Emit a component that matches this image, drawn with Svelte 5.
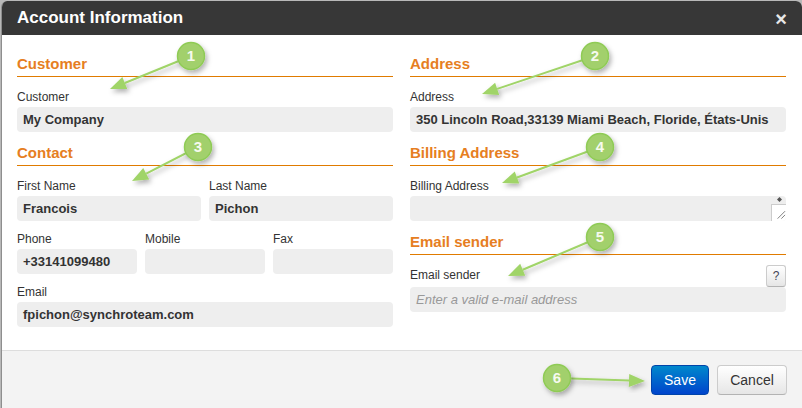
<script>
  const callouts = [
    { n: 1, cx: 191, cy: 56, tx: 110, ty: 89 },
    { n: 2, cx: 595, cy: 56, tx: 482, ty: 94 },
    { n: 3, cx: 198, cy: 147, tx: 132, ty: 181 },
    { n: 4, cx: 600, cy: 147, tx: 502, ty: 183 },
    { n: 5, cx: 600, cy: 237, tx: 508, ty: 276 },
    { n: 6, cx: 557, cy: 378, tx: 645, ty: 381 }
  ].map((c) => {
    const dx = c.cx - c.tx, dy = c.cy - c.ty;
    const len = Math.hypot(dx, dy);
    const ux = dx / len, uy = dy / len;
    const bx = c.tx + ux * 16, by = c.ty + uy * 16;
    const px = -uy * 6.5, py = ux * 6.5;
    return { ...c, bx, by, head: `${c.tx},${c.ty} ${bx + px},${by + py} ${bx - px},${by - py}` };
  });
</script>

<div class="page">
  <div class="modal">
    <header class="top">
      <h3>Account Information</h3>
      <span class="close">×</span>
    </header>
    <div class="body">
      <div class="col">
        <h4>Customer</h4>
        <div class="label">Customer</div>
        <div class="field">My Company</div>

        <h4 class="next">Contact</h4>
        <div class="grid two">
          <div>
            <div class="label">First Name</div>
            <div class="field">Francois</div>
          </div>
          <div>
            <div class="label">Last Name</div>
            <div class="field">Pichon</div>
          </div>
        </div>
        <div class="grid three">
          <div>
            <div class="label">Phone</div>
            <div class="field">+33141099480</div>
          </div>
          <div>
            <div class="label">Mobile</div>
            <div class="field"></div>
          </div>
          <div>
            <div class="label">Fax</div>
            <div class="field"></div>
          </div>
        </div>
        <div class="row">
          <div class="label">Email</div>
          <div class="field">fpichon@synchroteam.com</div>
        </div>
      </div>

      <div class="col">
        <h4>Address</h4>
        <div class="label">Address</div>
        <div class="field">350 Lincoln Road,33139 Miami Beach, Floride, États-Unis</div>

        <h4 class="next">Billing Address</h4>
        <div class="label">Billing Address</div>
        <div class="field area">
          <span class="spin"></span>
          <span class="grip">
            <svg width="15" height="17" viewBox="0 0 15 17">
              <path d="M6 14 L14 6 M10 14 L14 10" stroke="#777" stroke-width="1" fill="none" />
            </svg>
          </span>
        </div>

        <h4 class="next">Email sender</h4>
        <div class="label-row">
          <div class="label">Email sender</div>
          <button class="help">?</button>
        </div>
        <div class="field placeholder">Enter a valid e-mail address</div>
      </div>
    </div>
    <footer class="bottom">
      <button class="btn save">Save</button>
      <button class="btn cancel">Cancel</button>
    </footer>
  </div>

  <svg class="notes" width="802" height="408" viewBox="0 0 802 408">
    <defs>
      <filter id="sh" x="-40%" y="-40%" width="180%" height="180%">
        <feDropShadow dx="2" dy="3" stdDeviation="2.5" flood-color="#000" flood-opacity="0.3" />
      </filter>
    </defs>
    {#each callouts as c}
      <g filter="url(#sh)">
        <line x1={c.cx} y1={c.cy} x2={c.bx} y2={c.by} stroke="#a0d468" stroke-width="2" />
        <polygon points={c.head} fill="#a0d468" />
      </g>
      <circle cx={c.cx} cy={c.cy} r="13.5" fill="#a2d06c" stroke="#8fcb55" stroke-width="1.5" filter="url(#sh)" />
      <text x={c.cx} y={c.cy + 5} class="num">{c.n}</text>
    {/each}
  </svg>
</div>

<style>
  :global(body) {
    margin: 0;
    background: #fff;
  }

  .page {
    position: relative;
    width: 802px;
    height: 408px;
    overflow: hidden;
    background: #b8b8b8;
    font-family: "Liberation Sans", Arial, sans-serif;
    color: #333;
  }

  .modal {
    box-sizing: border-box;
    display: flex;
    flex-direction: column;
    width: 801px;
    height: 407px;
    margin: 1px 0 0 1px;
    background: #fff;
    border-left: 1px solid #8e8e8e;
    border-radius: 6px 6px 0 0;
    overflow: hidden;
  }

  .top {
    display: flex;
    align-items: center;
    justify-content: space-between;
    height: 34px;
    flex: none;
    padding: 0 15px;
    background: #373737;
    color: #fff;
  }

  h3 {
    margin: 0;
    font-size: 17px;
    font-weight: bold;
    line-height: 34px;
  }

  .close {
    font-size: 20px;
    font-weight: bold;
    line-height: 34px;
    color: #e8e8e8;
    margin-top: 1px;
  }

  .body {
    flex: 1;
    display: grid;
    grid-template-columns: 376px 376px;
    column-gap: 17px;
    padding: 17px 15px 0;
    align-content: start;
  }

  h4 {
    margin: 0;
    height: 24px;
    line-height: 24px;
    font-size: 15px;
    font-weight: bold;
    color: #e67e22;
    border-bottom: 1px solid #e07b00;
  }

  h4.next {
    margin-top: 9px;
  }

  .label {
    height: 20px;
    line-height: 20px;
    font-size: 12px;
    color: #333;
  }

  h4 + .label,
  h4 + .grid,
  h4 + .label-row {
    margin-top: 10px;
  }

  .field {
    position: relative;
    box-sizing: border-box;
    height: 25px;
    line-height: 25px;
    padding: 0 6px;
    background: #eee;
    border-radius: 4px;
    font-size: 13px;
    font-weight: bold;
    color: #333;
    white-space: nowrap;
    overflow: hidden;
  }

  .grid {
    display: grid;
    gap: 8px;
  }

  .two {
    grid-template-columns: 184px 184px;
  }

  .three {
    grid-template-columns: 120px 120px 120px;
    margin-top: 8px;
  }

  .row {
    margin-top: 8px;
  }

  .area {
    overflow: hidden;
  }

  .spin {
    position: absolute;
    right: 4px;
    top: 1px;
    width: 5px;
    height: 5px;
    background: #555;
    clip-path: polygon(50% 0, 100% 50%, 50% 100%, 0 50%);
  }

  .grip {
    position: absolute;
    right: 0;
    bottom: 0;
    width: 15px;
    height: 17px;
    background: #fff;
    border-left: 1px solid #ccc;
    border-top: 1px solid #ccc;
    box-sizing: border-box;
    display: flex;
  }

  .label-row {
    display: flex;
    justify-content: space-between;
    align-items: flex-start;
    height: 22px;
  }

  .help {
    box-sizing: border-box;
    width: 20px;
    height: 22px;
    padding: 0;
    border: 1px solid #ccc;
    border-bottom-color: #b3b3b3;
    border-radius: 3px;
    background: linear-gradient(#fff, #e6e6e6);
    color: #445;
    font: 12px "Liberation Sans", Arial, sans-serif;
  }

  .placeholder {
    font-weight: normal;
    font-style: italic;
    font-size: 13px;
    color: #999;
  }

  .bottom {
    box-sizing: border-box;
    flex: none;
    height: 58px;
    display: flex;
    justify-content: flex-end;
    align-items: flex-start;
    gap: 8px;
    padding: 14px 15px 0 0;
    background: #f3f3f3;
    border-top: 1px solid #ddd;
  }

  .btn {
    box-sizing: border-box;
    height: 30px;
    padding: 0;
    border-radius: 4px;
    font: 14px "Liberation Sans", Arial, sans-serif;
  }

  .save {
    width: 58px;
    color: #fff;
    background: linear-gradient(#0088cc, #0044cc);
    border: 1px solid #0044aa;
  }

  .cancel {
    width: 70px;
    color: #333;
    background: linear-gradient(#fff, #e6e6e6);
    border: 1px solid #ccc;
    border-bottom-color: #b3b3b3;
  }

  .notes {
    position: absolute;
    left: 0;
    top: 0;
    pointer-events: none;
  }

  .num {
    font: bold 15px "Liberation Sans", sans-serif;
    fill: #f6faef;
    text-anchor: middle;
  }
</style>
